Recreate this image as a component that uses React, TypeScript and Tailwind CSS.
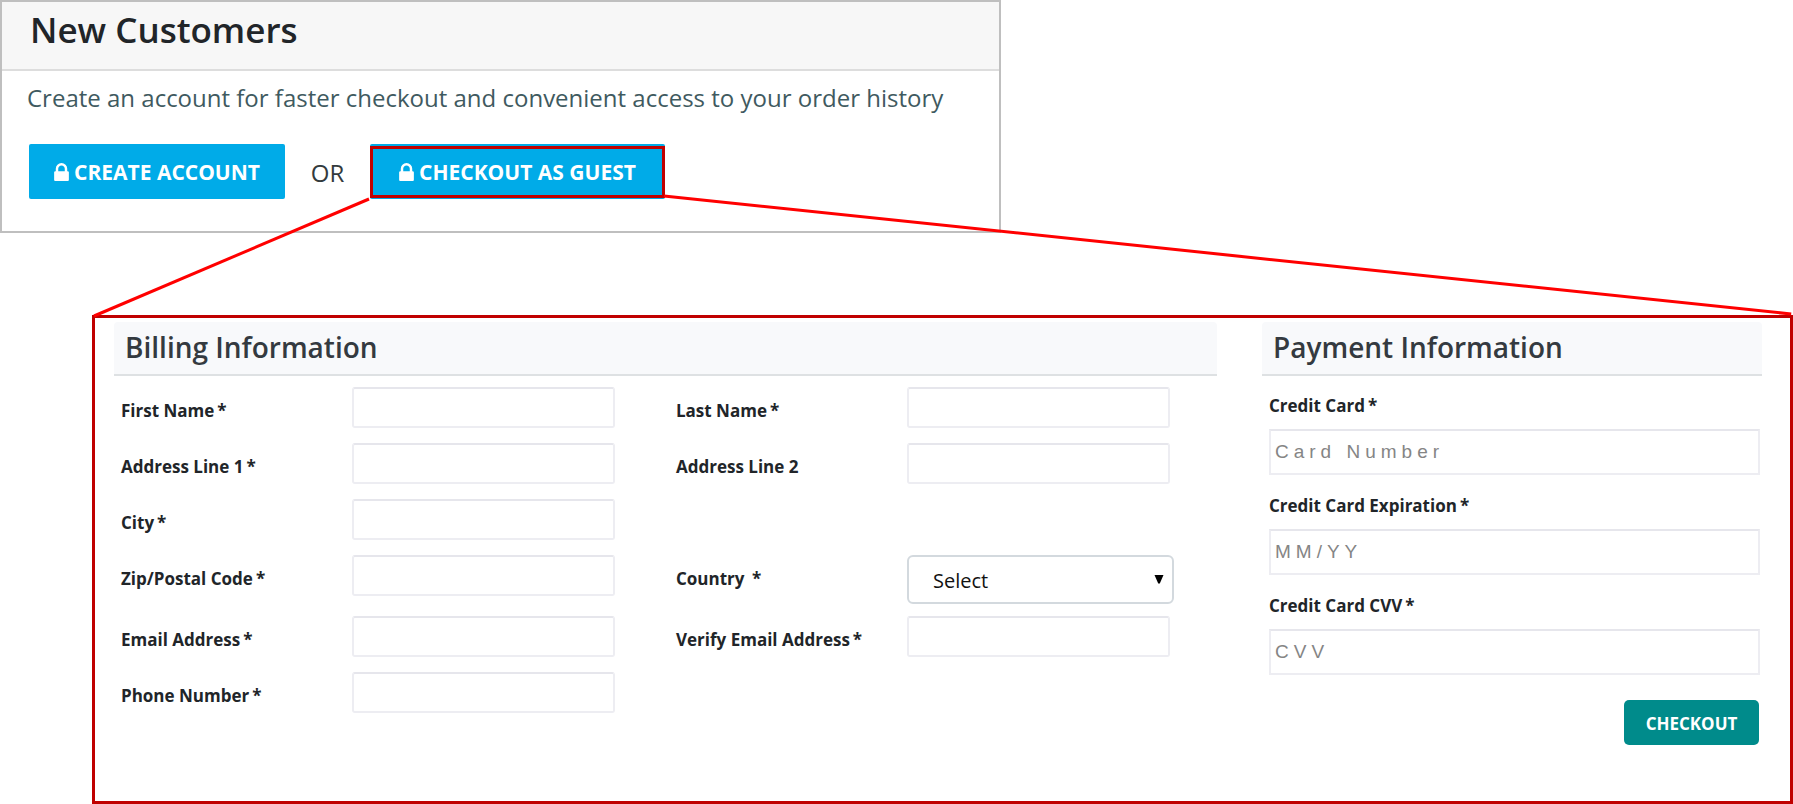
import React from "react";

type FieldProps = { id: string; label: string; type?: string; required?: boolean };

const labelClass = "text-[17px] leading-6 font-bold text-[#212529]";
const boxClass = "border-2 border-[#ededf2] border-t-[#e6e6ec] bg-white";
const accountButtonClass =
  "flex h-[55px] items-center justify-center gap-[5px] rounded-[2px] bg-[#00abe8] pt-[2px] text-[21px] font-bold text-white";

function LockIcon() {
  return (
    <svg viewBox="320 128 1152 1408" className="mb-px h-[18px] w-[15px]" fill="currentColor" aria-hidden="true">
      <path d="M640 768h512v-192q0-106-75-181t-181-75-181 75-75 181v192zm832 96v576q0 40-28 68t-68 28h-960q-40 0-68-28t-28-68v-576q0-40 28-68t68-28h32v-192q0-184 132-316t316-132 316 132 132 316v192h32q40 0 68 28t28 68z" />
    </svg>
  );
}

function Field({ id, label, type = "text", required = true }: FieldProps) {
  return (
    <>
      <label htmlFor={id} className={`${labelClass} pt-3`}>
        {label}
        {required && <span className="ml-[3px]">*</span>}
      </label>
      <input id={id} type={type} className={`${boxClass} h-[41px] w-[263px] rounded-[3px] px-2 text-[17px]`} />
    </>
  );
}

function CardField({ id, label, placeholder }: { id: string; label: string; placeholder: string }) {
  return (
    <div className="flex flex-col gap-[11px]">
      <label htmlFor={id} className={labelClass}>
        {label}
        <span className="ml-[3px]">*</span>
      </label>
      <input
        id={id}
        type="text"
        placeholder={placeholder}
        className={`${boxClass} h-[46px] w-full px-1 font-['Liberation_Sans',sans-serif] text-[19px] tracking-[5px] placeholder:text-[#858585]`}
      />
    </div>
  );
}

function SectionHeading({ children }: { children: React.ReactNode }) {
  return (
    <h2 className="rounded-t-[4px] border-b-2 border-[#dee1e3] bg-[#f8f9fb] px-[11px] pt-[7px] pb-[9px] text-[28px] leading-9 font-semibold text-[#343a40]">
      {children}
    </h2>
  );
}

function NewCustomers() {
  return (
    <section className="w-[1001px] max-w-full border-2 border-[#bfbfbf] bg-white">
      <header className="border-b-2 border-[#dddddd] bg-[#f7f7f7] px-7 pt-1 pb-[15px]">
        <h1 className="text-[35px] leading-[48px] font-semibold text-[#212529]">New Customers</h1>
      </header>
      <div className="px-[25px] pt-[11px] pb-8">
        <p className="text-[24px] leading-8 text-[#3f5a60]">
          Create an account for faster checkout and convenient access to your order history
        </p>
        <div className="mt-[30px] flex items-center pl-[2px]">
          <button type="button" className={`${accountButtonClass} w-[256px]`}>
            <LockIcon />
            CREATE ACCOUNT
          </button>
          <span className="w-[85px] pt-[3px] text-center text-[24px] text-[#333a3d]">OR</span>
          <button type="button" className={`${accountButtonClass} relative w-[295px]`}>
            <LockIcon />
            CHECKOUT AS GUEST
            <span className="absolute inset-x-0 top-[2px] bottom-px border-[3px] border-[#c00000]" />
          </button>
        </div>
      </div>
    </section>
  );
}

function Billing() {
  return (
    <section className="min-w-0 flex-1">
      <SectionHeading>Billing Information</SectionHeading>
      <div className="grid auto-rows-[minmax(56px,auto)] grid-cols-[231fr_324fr_231fr_310fr] items-start pt-[11px] pl-[7px]">
        <Field id="first" label="First Name" />
        <Field id="last" label="Last Name" />
        <Field id="address1" label="Address Line 1" />
        <Field id="address2" label="Address Line 2" required={false} />
        <Field id="city" label="City" />
        <div className="col-span-2" />
        <Field id="zip" label="Zip/Postal Code" />
        <label htmlFor="country" className={`${labelClass} pt-3`}>
          Country <span className="ml-[3px]">*</span>
        </label>
        <div className="relative mb-3 w-[267px]">
          <select id="country" className="h-[49px] w-full appearance-none rounded-[6px] border-2 border-[#d3d9de] bg-white pt-[2px] pl-6 text-[20px] text-[#111111]">
            <option>Select</option>
          </select>
          <svg viewBox="0 0 10 9" className="pointer-events-none absolute top-5 right-[10px] h-[9px] w-[10px]" aria-hidden="true">
            <path d="M0.5 0h9L5.8 8.6H4.2z" fill="#000" />
          </svg>
        </div>
        <Field id="email" label="Email Address" type="email" />
        <Field id="verify" label="Verify Email Address" type="email" />
        <Field id="phone" label="Phone Number" type="tel" />
      </div>
    </section>
  );
}

function Payment() {
  return (
    <section className="w-[500px] shrink-0">
      <SectionHeading>Payment Information</SectionHeading>
      <div className="flex flex-col gap-[19px] pt-[18px] pr-[2px] pl-[7px]">
        <CardField id="card" label="Credit Card" placeholder="Card Number" />
        <CardField id="expiration" label="Credit Card Expiration" placeholder="MM/YY" />
        <CardField id="cvv" label="Credit Card CVV" placeholder="CVV" />
      </div>
      <div className="flex justify-end pt-[25px] pr-[3px]">
        <button type="submit" className="h-[45px] w-[135px] rounded-[5px] bg-[#008b8b] pt-[2px] text-[17px] font-bold text-white">
          CHECKOUT
        </button>
      </div>
    </section>
  );
}

export default function App() {
  return (
    <main className="relative bg-white font-['Open_Sans','Noto_Sans',sans-serif]">
      <NewCustomers />
      <form
        className="mt-[82px] ml-[92px] flex gap-[45px] border-[3px] border-[#c00000] bg-white pt-1 pr-7 pb-14 pl-[19px]"
        onSubmit={(event) => event.preventDefault()}
      >
        <Billing />
        <Payment />
      </form>
      <svg className="pointer-events-none absolute top-0 left-0 h-[320px] w-full" aria-hidden="true">
        <line x1="369" y1="199" x2="94" y2="316" stroke="#ff0000" strokeWidth="3" />
        <line x1="664" y1="196" x2="99.9%" y2="314" stroke="#ff0000" strokeWidth="3" />
      </svg>
    </main>
  );
}
